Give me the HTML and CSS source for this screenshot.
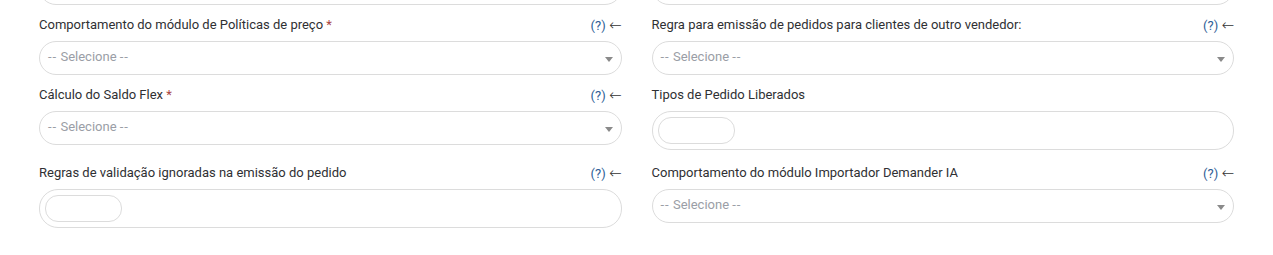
FILE: index.html
```html
<!DOCTYPE html>
<html lang="pt-BR">
<head>
<meta charset="utf-8">
<title>Configurações</title>
<link rel="stylesheet" href="styles.css">
</head>
<body>
<div class="form">
  <div class="grid">
    <div class="group prev"><div class="select"></div></div>
    <div class="group prev"><div class="select"></div></div>

    <div class="group">
      <div class="label-row"><label>Comportamento do módulo de Políticas de preço <span class="req">*</span></label><span class="help"><span class="q">(?)</span> <span class="arrow">←</span></span></div>
      <div class="select"><span class="ph"><span class="dash">--</span> Selecione <span class="dash">--</span></span><span class="caret"></span></div>
    </div>
    <div class="group">
      <div class="label-row"><label>Regra para emissão de pedidos para clientes de outro vendedor:</label><span class="help"><span class="q">(?)</span> <span class="arrow">←</span></span></div>
      <div class="select"><span class="ph"><span class="dash">--</span> Selecione <span class="dash">--</span></span><span class="caret"></span></div>
    </div>

    <div class="group">
      <div class="label-row"><label>Cálculo do Saldo Flex <span class="req">*</span></label><span class="help"><span class="q">(?)</span> <span class="arrow">←</span></span></div>
      <div class="select"><span class="ph"><span class="dash">--</span> Selecione <span class="dash">--</span></span><span class="caret"></span></div>
    </div>
    <div class="group">
      <div class="label-row"><label>Tipos de Pedido Liberados</label></div>
      <div class="multi"><span class="chip-input"></span></div>
    </div>

    <div class="group">
      <div class="label-row"><label>Regras de validação ignoradas na emissão do pedido</label><span class="help"><span class="q">(?)</span> <span class="arrow">←</span></span></div>
      <div class="multi"><span class="chip-input"></span></div>
    </div>
    <div class="group">
      <div class="label-row"><label>Comportamento do módulo Importador Demander IA</label><span class="help"><span class="q">(?)</span> <span class="arrow">←</span></span></div>
      <div class="select"><span class="ph"><span class="dash">--</span> Selecione <span class="dash">--</span></span><span class="caret"></span></div>
    </div>
  </div>
</div>
</body>
</html>
```

FILE: styles.css
```css
* { box-sizing: border-box; }
html, body { margin: 0; padding: 0; background: #fff; }
body {
  font-family: Roboto, "Liberation Sans", Arial, sans-serif;
  font-size: 13px;
  color: #333;
  overflow: hidden;
  height: 255px;
}
.form { padding: 0 39px; }
.grid {
  display: grid;
  grid-template-columns: 1fr 1fr;
  column-gap: 30px;
  align-items: start;
}
.group { margin-bottom: 12px; }
.group.prev { margin-top: -29px; margin-bottom: 12px; }
.label-row {
  display: flex;
  justify-content: space-between;
  align-items: center;
  height: 16px;
  line-height: 16px;
  margin-bottom: 8px;
}
.label-row label { color: #2f3033; }
.req { color: #a94442; }
.help { color: #333; white-space: nowrap; }
.help .q { color: #2e5e96; }
.arrow { font-family: "DejaVu Sans", sans-serif; font-size: 15px; font-weight: 300; }
.select {
  position: relative;
  height: 34px;
  border: 1px solid #dcdcdc;
  border-radius: 17px;
  display: flex;
  align-items: center;
  padding: 0 8px 3px;
}
.ph { color: #9a9ea6; }
.dash { letter-spacing: 1px; }
.caret {
  position: absolute;
  right: 8px;
  top: 15px;
  width: 0;
  height: 0;
  border-left: 4px solid transparent;
  border-right: 4px solid transparent;
  border-top: 5px solid #8a8a8a;
}
.multi {
  height: 39px;
  border: 1px solid #dcdcdc;
  border-radius: 19px;
  display: flex;
  align-items: center;
  padding: 0 5px;
  margin-bottom: 3px;
}
.chip-input {
  width: 77px;
  height: 27px;
  border: 1px solid #dcdcdc;
  border-radius: 13px;
}
```
